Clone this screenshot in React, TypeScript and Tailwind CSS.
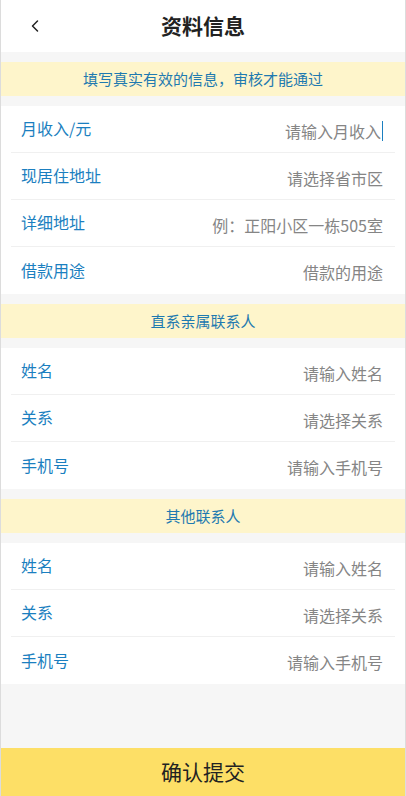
import { ChevronLeft } from 'lucide-react';

type Field = { label: string; placeholder: string; focused?: boolean };

const baseInfo: Field[] = [
  { label: '月收入/元', placeholder: '请输入月收入', focused: true },
  { label: '现居住地址', placeholder: '请选择省市区' },
  { label: '详细地址', placeholder: '例：正阳小区一栋505室' },
  { label: '借款用途', placeholder: '借款的用途' },
];

const contact: Field[] = [
  { label: '姓名', placeholder: '请输入姓名' },
  { label: '关系', placeholder: '请选择关系' },
  { label: '手机号', placeholder: '请输入手机号' },
];

function Notice({ text }: { text: string }) {
  return (
    <div className="mt-[10px] flex h-[34px] items-center justify-center bg-[#fef5cb] text-[15px] text-[#1f7ab0]">
      {text}
    </div>
  );
}

function FormBlock({ fields }: { fields: Field[] }) {
  return (
    <div className="mt-[10px] bg-white px-[10px]">
      {fields.map((f, i) => (
        <div
          key={f.label + i}
          className={`flex h-[47px] items-center justify-between pl-[10px] pr-[12px] ${
            i < fields.length - 1 ? 'border-b border-[#f0f0f0]' : ''
          }`}
        >
          <span className="mb-[2px] text-[16px] text-[#1b7fc0]">{f.label}</span>
          <span className="mt-[3px] flex items-center text-[16px] text-[#858585]">
            {f.placeholder}
            {f.focused && <span className="ml-[1px] inline-block h-[20px] w-[1px] bg-[#1b7fc0]" />}
          </span>
        </div>
      ))}
    </div>
  );
}

export default function App() {
  return (
    <div
      className="flex min-h-screen flex-col border-x border-[#dcdcdc] bg-[#f6f6f6]"
      style={{ fontFamily: '"Noto Sans CJK SC", "Noto Sans", sans-serif' }}
    >
      {/* Header */}
      <div className="relative flex h-[52px] items-center justify-center bg-white">
        <button className="absolute left-[24px] top-[16px] text-[#222]">
          <ChevronLeft className="h-[20px] w-[20px]" strokeWidth={1.8} />
        </button>
        <h1 className="text-[21px] font-bold text-[#222]">资料信息</h1>
      </div>

      <Notice text="填写真实有效的信息，审核才能通过" />
      <FormBlock fields={baseInfo} />

      <Notice text="直系亲属联系人" />
      <FormBlock fields={contact} />

      <Notice text="其他联系人" />
      <FormBlock fields={contact} />

      <div className="flex-1" />

      <button className="flex h-[48px] items-center justify-center bg-[#fddf66] text-[21px] text-[#222]">
        确认提交
      </button>
    </div>
  );
}
